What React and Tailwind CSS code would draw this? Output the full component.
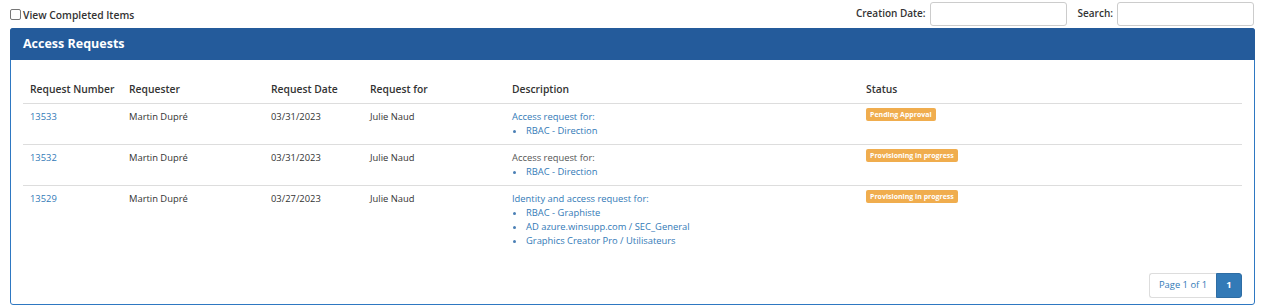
import React from 'react'

const rows = [
  {
    id: '13533',
    requester: 'Martin Dupré',
    date: '03/31/2023',
    target: 'Julie Naud',
    intro: 'Access request for:',
    introBlue: true,
    items: ['RBAC - Direction'],
    status: 'Pending Approval',
    border: true,
  },
  {
    id: '13532',
    requester: 'Martin Dupré',
    date: '03/31/2023',
    target: 'Julie Naud',
    intro: 'Access request for:',
    introBlue: false,
    items: ['RBAC - Direction'],
    status: 'Provisioning in progress',
    border: true,
  },
  {
    id: '13529',
    requester: 'Martin Dupré',
    date: '03/27/2023',
    target: 'Julie Naud',
    intro: 'Identity and access request for:',
    introBlue: true,
    items: ['RBAC - Graphiste', 'AD azure.winsupp.com / SEC_General', 'Graphics Creator Pro / Utilisateurs'],
    status: 'Provisioning in progress',
    border: false,
  },
]

const cols = 'grid grid-cols-[99px_142px_99px_142px_354px_1fr]'

export default function App() {
  return (
    <div className="w-[1267px] h-[307px] bg-white text-[#333] font-['Open_Sans',sans-serif] overflow-hidden">
      <div className="flex items-center h-[27px] pl-[10px] pr-[13px]">
        <div className="flex items-center gap-[2px] mt-[2px]">
          <span className="w-[11px] h-[11px] border border-[#767676] rounded-[2px] bg-white" />
          <span className="text-[10.3px] font-semibold leading-[14px]">View Completed Items</span>
        </div>
        <div className="ml-auto flex items-center">
          <span className="text-[10px] font-semibold mr-[4px]">Creation Date:</span>
          <input type="text" className="w-[137px] h-[24px] border border-[#ccc] rounded-[3px] outline-none" />
          <span className="text-[10px] font-semibold ml-[11px] mr-[4px]">Search:</span>
          <input type="text" className="w-[137px] h-[24px] border border-[#ccc] rounded-[3px] outline-none" />
        </div>
      </div>

      <div className="ml-[10px] mr-[12px] mt-[1px] border border-[#2e78c2] rounded-[3px]">
        <div className="h-[32px] -mx-px -mt-px bg-[#245b9b] rounded-t-[3px] flex items-center pl-[13px]">
          <span className="text-white text-[12.5px] font-bold">Access Requests</span>
        </div>

        <div className="px-[12px] pt-[15px] pb-[6px]">
          <div className={`${cols} border-b border-[#ddd] text-[10.3px] font-semibold leading-[14px]`}>
            {['Request Number', 'Requester', 'Request Date', 'Request for', 'Description', 'Status'].map(h => (
              <div key={h} className="px-[7px] py-[7px] whitespace-nowrap">{h}</div>
            ))}
          </div>

          {rows.map(r => (
            <div key={r.id} className={`${cols} text-[9.4px] leading-[14px] ${r.border ? 'border-b border-[#ddd]' : ''}`}>
              <div className="px-[7px] pt-[6px] pb-[6px] text-[#337ab7]">{r.id}</div>
              <div className="px-[7px] pt-[6px]">{r.requester}</div>
              <div className="px-[7px] pt-[6px]">{r.date}</div>
              <div className="px-[7px] pt-[6px]">{r.target}</div>
              <div className="px-[7px] pt-[6px] pb-[6px]">
                <div className={r.introBlue ? 'text-[#337ab7]' : 'text-[#555]'}>{r.intro}</div>
                {r.items.map(it => (
                  <div key={it} className="flex items-center text-[#337ab7]">
                    <span className="w-[3px] h-[3px] rounded-full bg-[#4a7fb5] ml-[1px] mr-[10px]" />
                    <span>{it}</span>
                  </div>
                ))}
              </div>
              <div className="px-[7px] pt-[3px]">
                <span className="inline-block bg-[#f0ad4e] text-white text-[7px] font-bold leading-[13px] px-[4px] rounded-[2px]">
                  {r.status}
                </span>
              </div>
            </div>
          ))}

          <div className="flex justify-end mt-[19px]">
            <div className="flex h-[25px] text-[9.4px]">
              <span className="flex items-center px-[9px] border border-[#ddd] border-r-0 rounded-l-[3px] text-[#337ab7]">Page 1 of 1</span>
              <span className="flex items-center justify-center w-[26px] bg-[#337ab7] border border-[#2e6da4] text-white font-bold rounded-r-[3px]">1</span>
            </div>
          </div>
        </div>
      </div>
    </div>
  )
}
